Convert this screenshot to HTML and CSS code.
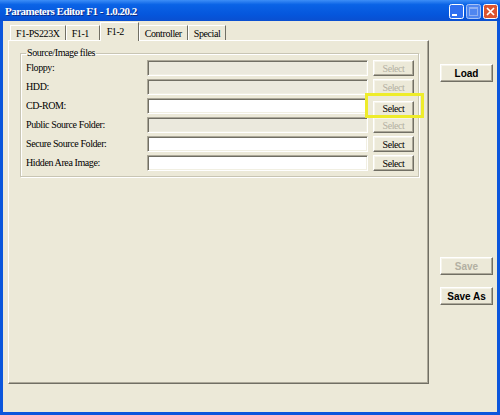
FILE: index.html
```html
<!DOCTYPE html>
<html lang="en">
<head>
    <meta charset="UTF-8">
    <title>Parameters Editor F1 - 1.0.20.2</title>
    <link rel="stylesheet" href="styles.css">
</head>
<body>
    <div class="window">
        <div class="titlebar">
            <span class="title">Parameters Editor F1 - 1.0.20.2</span>
            <div class="caption-buttons">
                <svg class="cap-btn" width="15" height="15" viewBox="0 0 15 15">
                    <rect x="0.5" y="0.5" width="14" height="14" rx="2" fill="#2f6ff0" stroke="#fff"/>
                    <rect x="3" y="10" width="5" height="2" fill="#fff"/>
                </svg>
                <svg class="cap-btn" width="15" height="15" viewBox="0 0 15 15">
                    <rect x="0.5" y="0.5" width="14" height="14" rx="2" fill="#4f86f0" stroke="#a9c4f6"/>
                    <rect x="3.5" y="3.5" width="8" height="8" fill="none" stroke="#8fb0f2"/>
                    <rect x="3.5" y="3.5" width="8" height="1.5" fill="#8fb0f2"/>
                </svg>
                <svg class="cap-btn" width="15" height="15" viewBox="0 0 15 15">
                    <rect x="0.5" y="0.5" width="14" height="14" rx="2" fill="#dc5430" stroke="#fff"/>
                    <path d="M4 4 L11 11 M11 4 L4 11" stroke="#fff" stroke-width="1.7"/>
                </svg>
            </div>
        </div>
        <div class="frame">
            <div class="tab-control">
                <div class="tab-strip">
                    <div class="tab">F1-PS223X</div>
                    <div class="tab">F1-1</div>
                    <div class="tab active">F1-2</div>
                    <div class="tab">Controller</div>
                    <div class="tab">Special</div>
                </div>
                <div class="tab-panel">
                    <fieldset class="group">
                        <legend>Source/Image files</legend>
                        <div class="file-grid">
                            <label>Floppy:</label>
                            <div class="textbox disabled"></div>
                            <button class="btn-select" disabled>Select</button>

                            <label>HDD:</label>
                            <div class="textbox disabled"></div>
                            <button class="btn-select" disabled>Select</button>

                            <label>CD-ROM:</label>
                            <div class="textbox"></div>
                            <span class="callout"><button class="btn-select">Select</button></span>

                            <label>Public Source Folder:</label>
                            <div class="textbox disabled"></div>
                            <button class="btn-select" disabled>Select</button>

                            <label>Secure Source Folder:</label>
                            <div class="textbox"></div>
                            <button class="btn-select">Select</button>

                            <label>Hidden Area Image:</label>
                            <div class="textbox"></div>
                            <button class="btn-select">Select</button>
                        </div>
                    </fieldset>
                </div>
            </div>
            <div class="side-buttons">
                <button class="btn-side load">Load</button>
                <button class="btn-side save" disabled>Save</button>
                <button class="btn-side save-as">Save As</button>
            </div>
        </div>
    </div>
</body>
</html>
```

FILE: styles.css
```css
body {
    margin: 0;
    padding: 0;
    width: 500px;
    height: 415px;
    overflow: hidden;
    font-family: "Liberation Serif", serif;
}
.window {
    width: 500px;
    height: 415px;
    display: flex;
    flex-direction: column;
}
.titlebar {
    height: 21px;
    display: flex;
    align-items: center;
    justify-content: space-between;
    background: linear-gradient(to bottom, #3d8ef7 0%, #0a63e6 22%, #0556dc 70%, #0a4fd0 100%);
}
.title {
    padding-left: 5px;
    color: #fff;
    font-weight: bold;
    font-size: 11px;
    letter-spacing: -0.5px;
    text-shadow: 1px 1px 0 #0b2d8a;
}
.caption-buttons {
    display: flex;
    gap: 2px;
    margin-right: 2px;
    padding-top: 1px;
}
.cap-btn {
    display: block;
}
.frame {
    flex: 1;
    display: flex;
    padding-left: 5px;
    background: #ece9d8;
    border: 3px solid #0b56dc;
    border-top: none;
}
.tab-control {
    width: 421px;
    display: flex;
    flex-direction: column;
}
.tab-strip {
    height: 19px;
    display: flex;
    align-items: flex-end;
    padding-left: 2px;
}
.tab {
    box-sizing: border-box;
    height: 15px;
    min-width: 34px;
    padding: 1px 5px 0 5px;
    font-size: 10px;
    line-height: 13px;
    letter-spacing: -0.4px;
    color: #000;
    border-top: 1px solid #fff;
    border-left: 1px solid #fff;
    border-right: 1px solid #716f64;
}
.tab.active {
    height: 19px;
    min-width: 39px;
    margin-bottom: -1px;
    padding: 2px 6px 0 6px;
    position: relative;
    z-index: 1;
    background: #ece9d8;
}
.tab-panel {
    height: 344px;
    box-sizing: border-box;
    background: #ece9d8;
    border-top: 1px solid #fff;
    border-left: 1px solid #fff;
    border-right: 1px solid #716f64;
    border-bottom: 1px solid #716f64;
    box-shadow: inset -1px -1px 0 #aca899;
}
.group {
    margin: 6px 9px 0 11px;
    padding: 1px 4px 5px 5px;
    border: 1px solid #c8c5b4;
    box-shadow: inset 1px 1px 0 #fff, 1px 1px 0 #fff;
}
.group legend {
    padding: 0 1px;
    font-size: 10px;
    line-height: 12px;
    letter-spacing: -0.4px;
}
.file-grid {
    display: grid;
    grid-template-columns: 121px 1fr 41px;
    grid-auto-rows: 16px;
    row-gap: 3px;
}
.file-grid label {
    font-size: 10px;
    line-height: 16px;
    letter-spacing: -0.4px;
}
.textbox {
    margin-right: 5px;
    background: #fff;
    border: 1px solid;
    border-color: #aca899 #fff #fff #aca899;
    box-shadow: inset 1px 1px 0 #716f64, inset -1px -1px 0 #f1efe2;
}
.textbox.disabled {
    background: #ebe9dd;
}
.btn-select, .btn-side {
    margin: 0;
    padding: 0;
    background: #ece9d8;
    color: #000;
    border: 1px solid;
    border-color: #fff #716f64 #716f64 #fff;
    box-shadow: inset -1px -1px 0 #aca899, inset 1px 1px 0 #f6f4ea;
    border-radius: 0;
}
.btn-select {
    width: 41px;
    height: 16px;
    font-family: "Liberation Serif", serif;
    font-size: 10px;
    letter-spacing: -0.4px;
}
.btn-select:disabled, .btn-side:disabled {
    color: #b3b0a2;
}
.callout {
    display: block;
    position: relative;
}
.callout::after {
    content: "";
    position: absolute;
    top: -5px;
    right: -10px;
    bottom: -4px;
    left: -8px;
    border: 3px solid #eeec2a;
}
.side-buttons {
    margin-left: 11px;
    width: 53px;
    display: flex;
    flex-direction: column;
}
.btn-side {
    height: 18px;
    font-family: "Liberation Sans", Arial, sans-serif;
    font-weight: bold;
    font-size: 10px;
}
.load {
    margin-top: 43px;
}
.save {
    margin-top: 175px;
}
.save-as {
    margin-top: 12px;
}
```
